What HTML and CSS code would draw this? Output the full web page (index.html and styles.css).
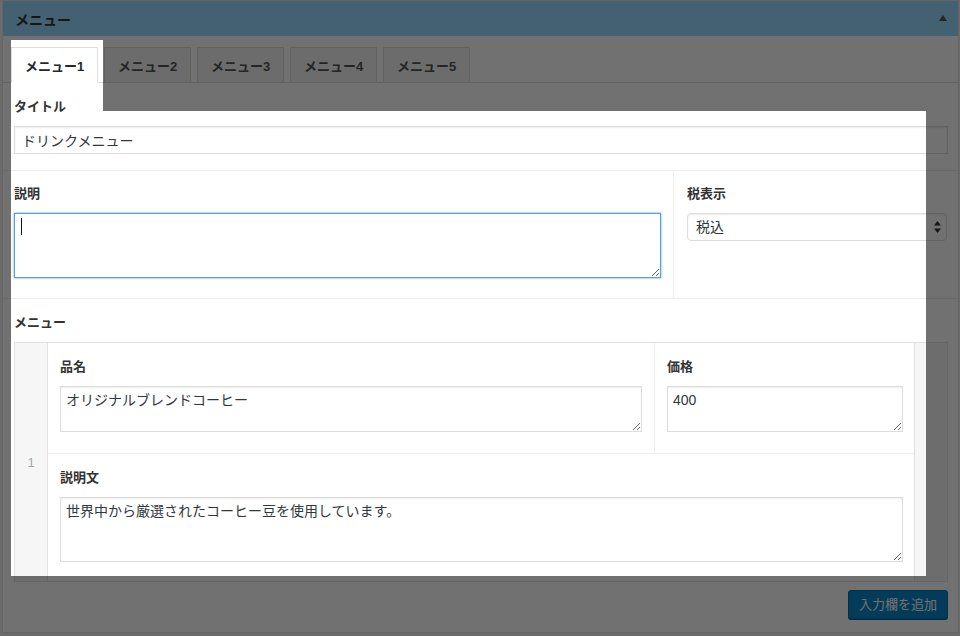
FILE: index.html
```html
<!DOCTYPE html>
<html lang="ja">
<head>
<meta charset="utf-8">
<title>メニュー</title>
<link rel="stylesheet" href="styles.css">
</head>
<body>
<div class="postbox">
  <div class="hndle">
    <h2>メニュー</h2>
    <svg class="toggle" width="8" height="6" viewBox="0 0 8 6"><path d="M4 0 L8 6 L0 6 Z" fill="#555"/></svg>
  </div>
  <div class="inside">
    <div class="tabs">
      <div class="tab active">メニュー1</div>
      <div class="tab">メニュー2</div>
      <div class="tab">メニュー3</div>
      <div class="tab">メニュー4</div>
      <div class="tab">メニュー5</div>
    </div>

    <div class="field field-title">
      <label class="lbl">タイトル</label>
      <input class="input" type="text" value="ドリンクメニュー">
    </div>

    <div class="row2">
      <div class="cell cell-desc">
        <label class="lbl">説明</label>
        <div class="focus-wrap"><textarea class="ta ta-lg ta-focus"></textarea></div>
      </div>
      <div class="cell cell-tax">
        <label class="lbl">税表示</label>
        <div class="select">
          <span class="sel-text">税込</span>
          <svg class="sel-arrows" width="7" height="12" viewBox="0 0 7 12"><path d="M3.5 0 L7 4.5 L0 4.5 Z M0 7.5 L7 7.5 L3.5 12 Z" fill="#333"/></svg>
        </div>
      </div>
    </div>

    <div class="field field-menu">
      <label class="lbl">メニュー</label>
      <div class="rep">
        <div class="rep-num">1</div>
        <div class="rep-body">
          <div class="rep-row1">
            <div class="rcell rcell-name">
              <label class="lbl">品名</label>
              <textarea class="ta ta-sm">オリジナルブレンドコーヒー</textarea>
            </div>
            <div class="rcell rcell-price">
              <label class="lbl">価格</label>
              <textarea class="ta ta-sm">400</textarea>
            </div>
          </div>
          <div class="rcell rcell-desc">
            <label class="lbl">説明文</label>
            <textarea class="ta ta-lg">世界中から厳選されたコーヒー豆を使用しています。</textarea>
          </div>
        </div>
        <div class="rep-handle"></div>
      </div>
      <div class="actions"><button class="btn" type="button">入力欄を追加</button></div>
    </div>
  </div>
</div>

<svg class="overlay" width="960" height="636" viewBox="0 0 960 636">
  <path fill-rule="evenodd" d="M0 0H960V636H0Z M11 40H103V111H926V576H11Z" fill="rgba(0,0,0,0.555)"/>
</svg>
</body>
</html>
```

FILE: styles.css
```css
* { box-sizing: border-box; }
html, body { margin: 0; padding: 0; }
body {
  width: 960px;
  height: 636px;
  overflow: hidden;
  position: relative;
  background: #f1f1f1;
  font-family: "Liberation Sans", "Noto Sans CJK JP", sans-serif;
  color: #23282d;
}

.postbox {
  margin-left: 2px;
  width: 957px;
  border: 1px solid #e5e5e5;
  background: #fff;
}

.hndle {
  height: 35px;
  background: #99daff;
  display: flex;
  align-items: center;
  justify-content: space-between;
  padding: 0 11px 0 12px;
}
.hndle h2 {
  margin: 0;
  font-size: 14px;
  font-weight: bold;
  color: #333;
}
.toggle { display: block; margin-top: -1px; }

.tabs {
  display: flex;
  align-items: flex-start;
  gap: 6px;
  height: 47px;
  padding: 11px 0 0 8px;
  border-bottom: 1px solid #dcdcdc;
}
.tab {
  width: 87px;
  height: 36px;
  border: 1px solid #dcdcdc;
  background: #f4f4f4;
  display: flex;
  align-items: center;
  justify-content: center;
  font-size: 13px;
  font-weight: bold;
  color: #555;
}
.tab.active {
  background: #fff;
  border-bottom-color: #fff;
  color: #23282d;
}

.lbl {
  display: block;
  font-size: 13px;
  font-weight: bold;
  line-height: 18px;
  margin-bottom: 10px;
  color: #333;
}

.field {
  padding: 15px 10px 16px 11px;
  border-bottom: 1px solid #eee;
}

.input {
  display: block;
  width: 100%;
  height: 28px;
  padding: 0 7px;
  border: 1px solid #ddd;
  box-shadow: inset 0 1px 2px rgba(0, 0, 0, 0.07);
  font-family: inherit;
  font-size: 14px;
  color: #32373c;
  background: #fff;
  outline: none;
}

.ta {
  display: block;
  width: 100%;
  padding: 4px 5px;
  border: 1px solid #ddd;
  box-shadow: inset 0 1px 2px rgba(0, 0, 0, 0.07);
  font-family: inherit;
  font-size: 14px;
  line-height: 18px;
  color: #32373c;
  background: #fff;
  outline: none;
  resize: vertical;
}
.ta-sm { height: 46px; }
.ta-lg { height: 65px; }
.ta-focus {
  border-color: #5b9dd9;
  box-shadow: 0 0 2px rgba(30, 140, 190, 0.8);
}
.focus-wrap { position: relative; }
.focus-wrap::after {
  content: "";
  position: absolute;
  left: 7px;
  top: 5px;
  width: 1px;
  height: 17px;
  background: #111;
}

.row2 {
  display: grid;
  grid-template-columns: 671px 1fr;
  border-bottom: 1px solid #eee;
}
.cell-desc {
  padding: 14px 12px 20px 11px;
  border-right: 1px solid #eee;
}
.cell-tax {
  padding: 14px 11px 20px 13px;
}
.select {
  height: 28px;
  display: flex;
  align-items: center;
  justify-content: space-between;
  padding: 0 5px 0 8px;
  border: 1px solid #ddd;
  border-radius: 4px;
  box-shadow: inset 0 1px 2px rgba(0, 0, 0, 0.07);
  font-size: 14px;
  color: #32373c;
  background: #fff;
}
.sel-text { margin-top: -3px; }
.sel-arrows { display: block; margin-top: -1px; }

.field-menu {
  padding: 15px 10px 13px 11px;
  border-bottom: none;
}

.rep {
  display: grid;
  grid-template-columns: 33px 1fr 33px;
  border: 1px solid #e1e1e1;
}
.rep-num {
  background: #f6f6f6;
  border-right: 1px solid #e1e1e1;
  display: flex;
  align-items: center;
  justify-content: center;
  font-size: 13px;
  color: #a3a8ad;
}
.rep-handle {
  background: #f6f6f6;
  border-left: 1px solid #e1e1e1;
}
.rep-row1 {
  display: grid;
  grid-template-columns: 607px 1fr;
  border-bottom: 1px solid #eee;
}
.rcell-name {
  padding: 15px 12px 21px 12px;
  border-right: 1px solid #eee;
}
.rcell-price {
  padding: 15px 11px 21px 12px;
}
.rcell-desc {
  padding: 15px 11px 19px 12px;
}

.actions {
  display: flex;
  justify-content: flex-end;
  margin-top: 8px;
}
.btn {
  height: 29px;
  padding: 0 10px;
  border: 1px solid #0072ad;
  border-radius: 3px;
  background: #0a86c6;
  box-shadow: 0 1px 0 #006799;
  color: #fff;
  font-family: inherit;
  font-size: 13px;
  line-height: 27px;
}

.overlay {
  position: absolute;
  left: 0;
  top: 0;
  pointer-events: none;
}
```
